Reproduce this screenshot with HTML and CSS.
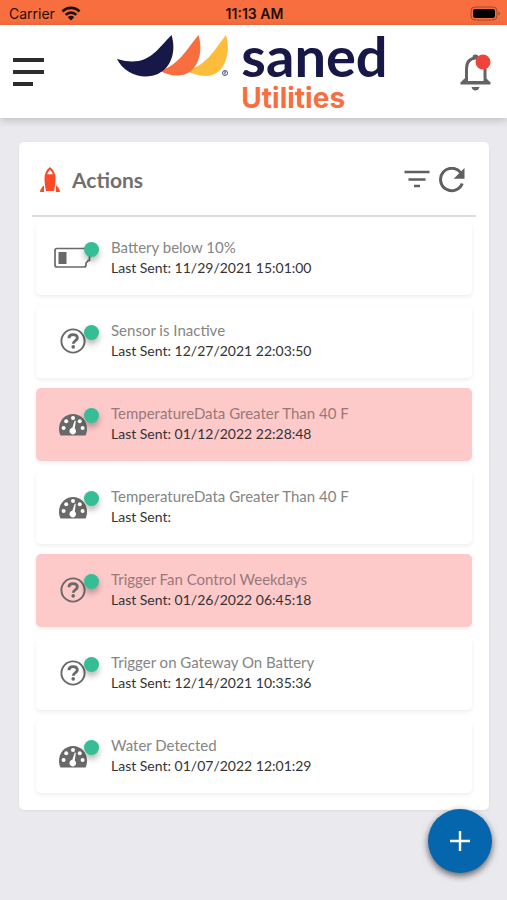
FILE: index.html
```html
<!DOCTYPE html>
<html lang="en">
<head>
<meta charset="utf-8">
<meta name="viewport" content="width=device-width, initial-scale=1">
<title>Saned Utilities</title>
<link rel="stylesheet" href="styles.css">
</head>
<body>
<svg class="sprite" aria-hidden="true">
  <symbol id="battery" viewBox="0 0 40 24">
    <path d="M4 2.500h29q2 0 2 2v4h1.500v6h-1.500v.5l-2 2v2q0 2-2 2H4q-2 0-2-2V4.500q0-2 2-2z" fill="none" stroke="currentColor" stroke-width="1.700"/>
    <rect x="5.500" y="6" width="8" height="12" fill="currentColor"/>
  </symbol>
  <symbol id="question" viewBox="0 0 26 26">
    <circle cx="13" cy="13" r="11.600" fill="none" stroke="currentColor" stroke-width="1.900"/>
    <path d="M8.900 10.200C9 7.700 10.700 6.600 13 6.600c2.400 0 4.300 1.200 4.300 3.300 0 3.100-4 2.900-4 5.800" fill="none" stroke="currentColor" stroke-width="2.900"/>
    <circle cx="13.200" cy="18.900" r="1.800" fill="currentColor"/>
  </symbol>
  <symbol id="gauge" viewBox="0 0 30 26">
    <path d="M2.500 24.500C1.500 22.500 1 20.500 1 17.800 1 9.500 7 3 15 3s14 6.500 14 14.800c0 2.700-.5 4.700-1.500 6.700z" fill="currentColor"/>
    <g class="cutout">
      <circle cx="5.600" cy="17" r="2"/><circle cx="8.200" cy="10.300" r="2"/><circle cx="15" cy="7" r="2"/><circle cx="21.800" cy="10.300" r="2"/><circle cx="24.600" cy="17" r="2"/>
      <path d="M16.800 9.500l1 .3-1 7.700a3.300 3.300 0 1 1-2.500-.7z"/>
    </g>
  </symbol>
</svg>

<div class="status">
  <span class="carrier">Carrier
    <svg width="20" height="15" viewBox="0 0 20 15" aria-hidden="true"><g fill="none" stroke="#1c0f0b" stroke-width="2.700"><path d="M1.500 5.500a12 12 0 0 1 17 0"/><path d="M4.700 8.900a7.500 7.500 0 0 1 10.600 0"/></g><path d="M10 14.500l-3.200-3.300a4.500 4.500 0 0 1 6.400 0z" fill="#1c0f0b"/></svg>
  </span>
  <span class="time">11:13 AM</span>
  <svg class="power" width="31" height="15" viewBox="0 0 31 15" aria-hidden="true"><rect x="2" y="1" width="26" height="13" rx="4" fill="none" stroke="#9a4a30"/><rect x="4" y="3" width="22" height="9" rx="2" fill="#000"/><path d="M29.500 5.500q3 2 0 4z" fill="#9a4a30"/></svg>
</div>

<header class="topbar">
  <button class="icon-button" aria-label="Menu">
    <svg width="32" height="30" viewBox="0 0 32 30"><path d="M0 3h31M0 15h31M0 27h20" stroke="#2c2c2c" stroke-width="4"/></svg>
  </button>
  <a class="brand" href="#" aria-label="Saned Utilities">
    <svg class="wings" width="112" height="44" viewBox="0 0 112 44" aria-hidden="true">
      <path d="M109 1C112 10 112 25 104 35 96 45 81 43 68 36 87 36 100 12 109 1z" fill="#fdbd3b"/>
      <path d="M81.500 1C85 12 84 26 76 35 68 44 53 43 41 36 59 36 72 12 81.500 1z" fill="#f86e3f"/>
      <path d="M54.500 1C58 12 57 26 48 35 33 49 8 42 0 25 30 34 39 17 54.500 1z" fill="#171848"/>
      <circle cx="108" cy="39" r="2.500" fill="#fff" stroke="#555579"/><path d="M107.300 40.500v-3h1.200v1.500h-1l1.300 1.500" fill="none" stroke="#555579" stroke-width=".6"/>
    </svg>
    <span class="brand-text"><span class="name">saned</span><span class="sub">Utilities</span></span>
  </a>
  <button class="icon-button" aria-label="Notifications">
    <svg width="32" height="38" viewBox="0 0 32 38"><path d="M6.500 28.500V16C6.500 9 10 5.500 15.500 5s9.500 4 9.500 11v12.500" fill="none" stroke="#646464" stroke-width="3"/><path d="M12.500 5.500V4q0-2.500 3-2.500t3 2.500v1.500z" fill="#646464"/><path d="M.500 31.500v-2l4-4h22l4 4v2z" fill="#646464"/><path d="M8 25h15.500v3H8z" fill="#fff"/><path d="M11.500 34h8q-1 3.500-4 3.500t-4-3.500z" fill="#646464"/><circle cx="23" cy="9" r="7.500" fill="#f0433a"/></svg>
  </button>
</header>

<main class="card">
  <div class="card-head">
    <svg width="20" height="26" viewBox="0 0 20 26" aria-hidden="true"><path d="M10 0c3.700 2.700 5.500 6.700 5.500 11 0 4.500-.6 9.500-1.600 13H6.100C5.100 20.500 4.500 15.500 4.500 11 4.500 6.700 6.300 2.700 10 0z" fill="#fc4a28"/><path d="M7.200 7.300Q8 4.300 10 2.700q2 1.600 2.800 4.600z" fill="#fff"/><path d="M4 18.500V25H0q.3-4 4-6.500zM16 18.500V25h4q-.3-4-4-6.500z" fill="#fc4a28"/></svg>
    <h1>Actions</h1>
    <button class="icon-button" aria-label="Filter">
      <svg width="26" height="26" viewBox="0 0 26 26"><path d="M.5 5h25M4.500 12.500h17M10 19h6" stroke="#5f5f5f" stroke-width="2.600"/></svg>
    </button>
    <button class="icon-button" aria-label="Refresh">
      <svg width="26" height="26" viewBox="0 0 26 26"><path d="M21.500 5.500A11.200 11.200 0 1 0 23.200 16.500" fill="none" stroke="#5f5f5f" stroke-width="3"/><path d="M25.500 1v10.800H14.700z" fill="#5f5f5f"/></svg>
    </button>
  </div>
  <ul class="actions">
    <li class="action"><span class="kind"><svg class="wide"><use href="#battery"/></svg><i class="dot"></i></span><div><h2>Battery below 10%</h2><p>Last Sent: 11/29/2021 15:01:00</p></div></li>
    <li class="action"><span class="kind"><svg><use href="#question"/></svg><i class="dot"></i></span><div><h2>Sensor is Inactive</h2><p>Last Sent: 12/27/2021 22:03:50</p></div></li>
    <li class="action alert"><span class="kind"><svg class="gauge"><use href="#gauge"/></svg><i class="dot"></i></span><div><h2>TemperatureData Greater Than 40 F</h2><p>Last Sent: 01/12/2022 22:28:48</p></div></li>
    <li class="action"><span class="kind"><svg class="gauge"><use href="#gauge"/></svg><i class="dot"></i></span><div><h2>TemperatureData Greater Than 40 F</h2><p>Last Sent:</p></div></li>
    <li class="action alert"><span class="kind"><svg><use href="#question"/></svg><i class="dot"></i></span><div><h2>Trigger Fan Control Weekdays</h2><p>Last Sent: 01/26/2022 06:45:18</p></div></li>
    <li class="action"><span class="kind"><svg><use href="#question"/></svg><i class="dot"></i></span><div><h2>Trigger on Gateway On Battery</h2><p>Last Sent: 12/14/2021 10:35:36</p></div></li>
    <li class="action"><span class="kind"><svg class="gauge"><use href="#gauge"/></svg><i class="dot"></i></span><div><h2>Water Detected</h2><p>Last Sent: 01/07/2022 12:01:29</p></div></li>
  </ul>
</main>

<button class="add" aria-label="Add action">
  <svg width="20" height="20" viewBox="0 0 20 20"><path d="M10 0v20M0 10h20" stroke="#fff" stroke-width="2.400"/></svg>
</button>
</body>
</html>
```

FILE: styles.css
```css
* {
  box-sizing: border-box;
  margin: 0;
  padding: 0;
}

body {
  min-height: 100vh;
  background: #e9e9ee;
  font-family: Lato, "Liberation Sans", sans-serif;
  color: #333;
}

svg {
  display: block;
}

button {
  border: 0;
  background: none;
  cursor: pointer;
}

.sprite {
  position: absolute;
  width: 0;
  height: 0;
}

.status {
  display: grid;
  grid-template-columns: 1fr auto 1fr;
  align-items: center;
  height: 25px;
  padding: 2px 7px 0 9px;
  background: #f86e3f;
  color: #1c0f0b;
  font: 14px/20px Inter, sans-serif;
}

.carrier {
  display: flex;
  align-items: center;
  gap: 6px;
}

.time {
  font-weight: 600;
}

.power {
  justify-self: end;
}

.topbar {
  display: flex;
  align-items: center;
  justify-content: space-between;
  height: 93px;
  padding: 0 15px 0 13px;
  background: #fff;
  box-shadow: 0 2px 8px rgba(0, 0, 0, 0.2);
}

.brand {
  display: flex;
  align-items: flex-start;
  gap: 12px;
  text-decoration: none;
}

.wings {
  margin-top: 4px;
}

.brand-text {
  display: flex;
  flex-direction: column;
}

.name {
  color: #171848;
  font-size: 56px;
  font-weight: 700;
  line-height: 52px;
}

.sub {
  color: #f86e3f;
  font: 700 28px/32px Inter, sans-serif;
}

.card {
  margin: 24px 18px 0 19px;
  padding: 0 13px 17px;
  border-radius: 5px;
  background: #fff;
  box-shadow: 0 1px 3px rgba(0, 0, 0, 0.06);
}

.card-head {
  display: flex;
  align-items: center;
  gap: 9px;
  height: 75px;
  padding: 3px 11px 0 8px;
  border-bottom: 2px solid #dcdcdc;
}

.card-head h1 {
  flex: 1;
  padding-left: 3px;
  color: #707070;
  font-size: 21px;
  font-weight: 700;
  line-height: 28px;
}

.actions {
  display: grid;
  gap: 10px;
  padding: 5px 4px 0;
  list-style: none;
}

.action {
  display: flex;
  height: 73px;
  padding: 15px 16px;
  border-radius: 5px;
  background: #fff;
  box-shadow: 0 2px 4px rgba(0, 0, 0, 0.07);
}

.alert {
  background: #fec9c9;
}

.kind {
  position: relative;
  display: flex;
  align-items: center;
  justify-content: center;
  width: 41px;
  height: 42px;
  margin-right: 18px;
  color: #696969;
}

.kind svg {
  width: 26px;
  height: 26px;
}

.kind .wide {
  width: 40px;
  height: 24px;
}

.kind .gauge {
  width: 30px;
}

.dot {
  position: absolute;
  top: 5px;
  right: -6px;
  width: 15px;
  height: 15px;
  border-radius: 50%;
  background: #35bd96;
  box-shadow: 0 4px 6px rgba(0, 0, 0, 0.3);
}

.cutout {
  fill: #fff;
}

.action h2 {
  color: #858585;
  font-size: 15px;
  font-weight: 400;
  line-height: 20px;
}

.alert h2 {
  color: #98797a;
}

.action p {
  font-size: 14px;
  line-height: 22px;
}

.add {
  position: fixed;
  right: 15px;
  bottom: 27px;
  display: grid;
  place-items: center;
  width: 64px;
  height: 64px;
  border-radius: 50%;
  background: #0566ae;
  box-shadow: 0 3px 7px rgba(0, 0, 0, 0.6);
}
```
